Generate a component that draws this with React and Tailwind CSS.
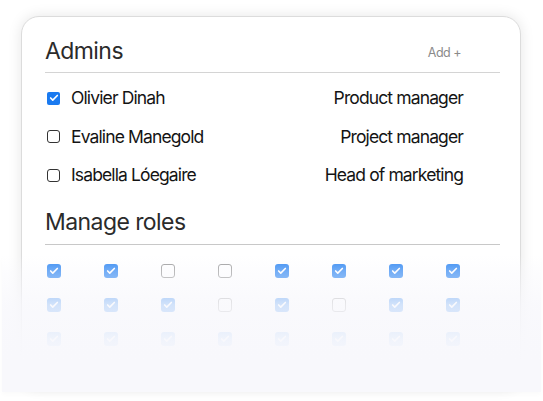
import { Check } from 'lucide-react';

const admins = [
  { name: 'Olivier Dinah', role: 'Product manager', checked: true },
  { name: 'Evaline Manegold', role: 'Project manager', checked: false },
  { name: 'Isabella Lóegaire', role: 'Head of marketing', checked: false },
];

const roles = [
  [true, true, false, false, true, true, true, true],
  [true, true, true, false, true, false, true, true],
  [true, true, true, true, true, true, true, true],
];

function SmallBox({ checked }) {
  return checked ? (
    <span className="w-[13px] h-[13px] rounded-[2px] bg-[#1a7af0] flex items-center justify-center">
      <Check className="w-[10px] h-[10px] text-white" strokeWidth={4} />
    </span>
  ) : (
    <span className="w-[13px] h-[13px] rounded-[3px] border border-[#333] bg-white" />
  );
}

function RoleBox({ checked }) {
  return checked ? (
    <span className="w-[14px] h-[14px] rounded-[3px] bg-[#2a84f2] flex items-center justify-center">
      <Check className="w-[10px] h-[10px] text-white" strokeWidth={4} />
    </span>
  ) : (
    <span className="w-[14px] h-[14px] rounded-[3px] border border-[#999] bg-white" />
  );
}

export default function App() {
  return (
    <div className="relative w-[543px] h-[401px] bg-white overflow-hidden font-['Inter',sans-serif]">
      <div className="ml-[21px] mt-[16px] w-[500px] h-[372px] rounded-[18px] border border-[#dcdcdc] bg-white shadow-[0_0_14px_rgba(0,0,0,0.10)] pl-[23px] pr-[20px] pt-[20px]">
        <div className="flex items-center justify-between h-[28px] pr-[39px]">
          <h2 className="text-[23px] leading-[28px] text-[#2b2b2b] tracking-[-0.025em]">Admins</h2>
          <span className="text-[12.5px] text-[#8a8a8a] tracking-[-0.04em] mt-[4px]">Add +</span>
        </div>
        <div className="mt-[7px] border-t border-[#d4d4d4]" />
        <div className="pt-[6px] pr-[37px]">
          {admins.map(a => (
            <div key={a.name} className="h-[38.5px] flex items-center justify-between">
              <div className="flex items-center gap-[11px] pl-[2px]">
                <SmallBox checked={a.checked} />
                <span className="text-[17.5px] text-[#141414] tracking-[-0.05em]">{a.name}</span>
              </div>
              <span className="text-[17.5px] text-[#141414] tracking-[-0.05em]">{a.role}</span>
            </div>
          ))}
        </div>
        <h2 className="mt-[13px] text-[23px] leading-[28px] text-[#2b2b2b] tracking-[-0.025em]">Manage roles</h2>
        <div className="mt-[8px] border-t border-[#c8c8c8]" />
        <div className="pt-[19px] pl-[2px] flex flex-col gap-[20px]">
          {roles.map((row, i) => (
            <div key={i} className="flex gap-[43px]">
              {row.map((c, j) => (
                <RoleBox key={j} checked={c} />
              ))}
            </div>
          ))}
        </div>
      </div>
      <div className="absolute left-[2px] right-[2px] top-[255px] h-[137px] bg-[linear-gradient(to_bottom,rgba(248,248,252,0)_0px,rgba(248,248,252,0.35)_16px,rgba(248,248,252,0.82)_50px,rgba(248,248,252,0.96)_84px,#f8f8fc_105px)] shadow-[0_3px_4px_rgba(0,0,0,0.02)]" />
    </div>
  );
}
